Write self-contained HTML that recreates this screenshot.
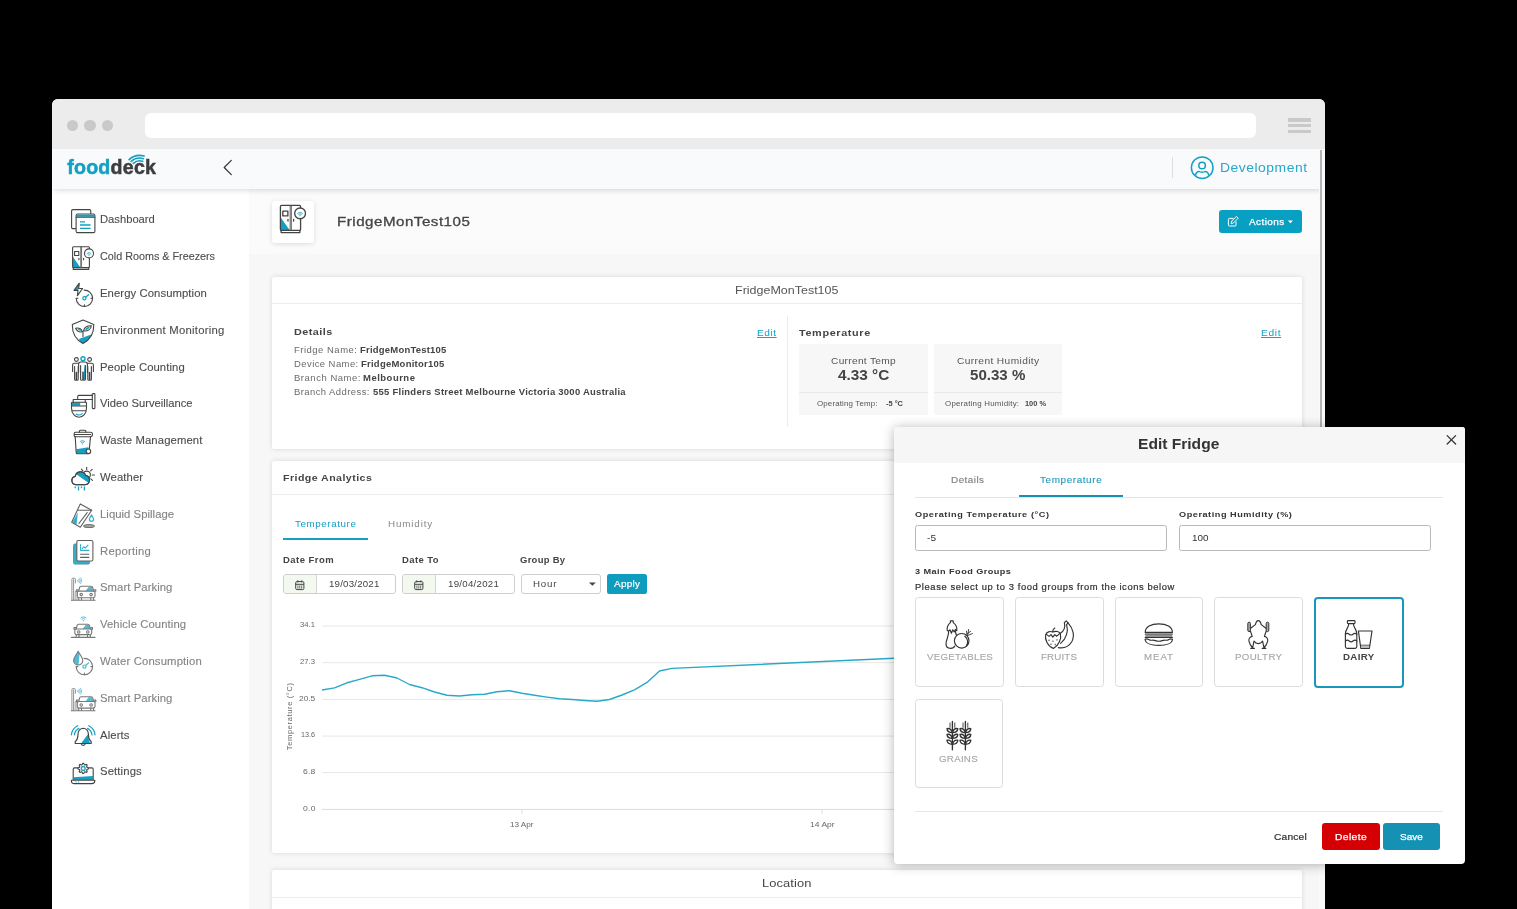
<!DOCTYPE html>
<html><head><meta charset="utf-8"><title>fooddeck</title>
<style>
html,body{margin:0;padding:0;}
body{width:1517px;height:909px;overflow:hidden;background:#000;position:relative;font-family:"Liberation Sans",sans-serif;}
.win{position:absolute;left:52px;top:99px;width:1273px;height:830px;border-radius:6px 6px 0 0;overflow:hidden;background:#f7f7f7;}
.pg{position:absolute;left:-52px;top:-99px;width:1517px;height:909px;}
.a{position:absolute;box-sizing:border-box;}
.t{position:absolute;white-space:pre;display:block;}
.tl{position:absolute;left:0;top:0;width:1517px;height:909px;will-change:transform;}
.card{position:absolute;background:#fff;box-shadow:0 0 5px rgba(0,0,0,.13);border-radius:2px;}
.dot{position:absolute;width:11.6px;height:11.6px;border-radius:50%;background:#c9c9c9;top:119.7px;}
svg{position:absolute;left:0;top:0;overflow:visible;}
</style></head><body>
<div class="win"><div class="pg">
<!-- browser chrome -->
<div class="a" style="left:52px;top:99px;width:1273px;height:50px;background:#ececec;"></div>
<div class="dot" style="left:66.5px"></div><div class="dot" style="left:84px"></div><div class="dot" style="left:101.6px"></div>
<div class="a" style="left:144.6px;top:113px;width:1111.6px;height:25px;border-radius:6px;background:#fff;"></div>
<div class="a" style="left:1287.8px;top:118.1px;width:23.2px;height:3.7px;background:#c9c9c9;border-radius:.5px;"></div>
<div class="a" style="left:1287.8px;top:123.9px;width:23.2px;height:3.5px;background:#c9c9c9;border-radius:.5px;"></div>
<div class="a" style="left:1287.8px;top:129.7px;width:23.2px;height:3.4px;background:#c9c9c9;border-radius:.5px;"></div>
<!-- page areas -->
<div class="a" style="left:249px;top:189px;width:1076px;height:65.2px;background:#fbfbfb;"></div>
<div class="a" style="left:52px;top:189px;width:197.2px;height:720px;background:#fff;"></div>
<!-- cards -->
<div class="card" style="left:271.8px;top:276.6px;width:1030.4px;height:172px;"></div>
<div class="a" style="left:271.8px;top:303px;width:1030.4px;height:1px;background:#ececec;"></div>
<div class="a" style="left:787px;top:315.6px;width:1px;height:111px;background:#ececec;"></div>
<div class="a" style="left:799px;top:344px;width:129px;height:70.9px;background:#f7f7f7;border-radius:2px;"></div>
<div class="a" style="left:933.9px;top:344px;width:128.6px;height:70.9px;background:#f7f7f7;border-radius:2px;"></div>
<div class="a" style="left:799px;top:392px;width:129px;height:1px;background:#eaeaea;"></div>
<div class="a" style="left:933.9px;top:392px;width:128.6px;height:1px;background:#eaeaea;"></div>
<div class="card" style="left:271.8px;top:460.6px;width:1030.4px;height:392.4px;"></div>
<div class="a" style="left:271.8px;top:494.2px;width:1030.4px;height:1px;background:#ececec;"></div>
<div class="a" style="left:283px;top:538.2px;width:85px;height:2px;background:#1a9fc0;"></div>
<div class="a" style="left:283.4px;top:574px;width:112.3px;height:19.5px;border:1px solid #cfcfcf;border-radius:3px;background:#fff;overflow:hidden;"><div style="position:absolute;left:0;top:0;width:31.4px;height:100%;background:#f4f9f0;border-right:1px solid #d4d4d4;"></div></div>
<div class="a" style="left:402.4px;top:574px;width:112.5px;height:19.5px;border:1px solid #cfcfcf;border-radius:3px;background:#fff;overflow:hidden;"><div style="position:absolute;left:0;top:0;width:31.4px;height:100%;background:#f4f9f0;border-right:1px solid #d4d4d4;"></div></div>
<div class="a" style="left:520.9px;top:574px;width:80px;height:19.5px;border:1px solid #cfcfcf;border-radius:3px;background:#fff;"></div>
<div class="a" style="left:606.7px;top:574.4px;width:40.2px;height:19.2px;border-radius:2.5px;background:#0f9dbf;"></div>
<div class="card" style="left:271.8px;top:870px;width:1030.4px;height:60px;"></div>
<div class="a" style="left:271.8px;top:897px;width:1030.4px;height:1px;background:#ececec;"></div>
<!-- title icon box + actions -->
<div class="a" style="left:271.8px;top:200.8px;width:42px;height:41.8px;background:#fff;border-radius:3px;box-shadow:0 1px 5px rgba(0,0,0,.13);"></div>
<div class="a" style="left:1218.9px;top:209.9px;width:83.3px;height:23.4px;border-radius:3px;background:#08a0c2;"></div>
<!-- app header -->
<div class="a" style="left:52px;top:149px;width:1273px;height:40px;background:#f9fafb;box-shadow:0 3px 6px -2px rgba(0,0,0,.16);"></div>
<div class="a" style="left:1172px;top:157px;width:1px;height:21px;background:#dedede;"></div>
<!-- scrollbar -->
<div class="a" style="left:1319.4px;top:149px;width:5.6px;height:760px;background:#fafafa;"></div>
<div class="a" style="left:1320.1px;top:150px;width:2.1px;height:420px;background:#b4b4b4;"></div>
<div class="tl"><span class="t" style="left:67.2px;top:154.9px;font-size:19.6px;line-height:24px;font-weight:700;letter-spacing:0.24px;color:#12a0c3;-webkit-text-stroke:0.5px #12a0c3;">food<span style="color:#3d3d3f;-webkit-text-stroke:0.5px #3d3d3f;">deck</span></span></div>
<svg width="1517" height="909" viewBox="0 0 1517 909">
<path d="M129.1,159.7 Q135.2,153.6 144.1,156 M131.1,161.5 Q136.4,156.4 143.4,158.7 M133.3,163.3 Q137.6,159.6 142.7,161.3" fill="none" stroke="#12a0c3" stroke-width="1.7" stroke-linecap="round"/>
<path d="M231.3,160.4 L224.2,167.5 L231.3,174.6" fill="none" stroke="#333" stroke-width="1.2" stroke-linecap="round" stroke-linejoin="round"/>
<!-- user icon -->
<g fill="none" stroke="#12a0c3" stroke-width="1.5"><circle cx="1202.2" cy="167.7" r="10.8"/><circle cx="1202.1" cy="165.5" r="3.3"/><path d="M1195.4,175.6 C1195.8,172.6 1197.8,171.5 1199.3,171.5 C1200.6,172.4 1203.6,172.4 1204.9,171.5 C1206.4,171.5 1208.4,172.6 1208.8,175.6"/></g>
<!-- actions icon -->
<g fill="none" stroke="#fff" stroke-width="1" stroke-linecap="round" stroke-linejoin="round"><path d="M1233,218.4 H1229.4 Q1228.4,218.4 1228.4,219.4 V225 Q1228.4,226 1229.4,226 H1235 Q1236,226 1236,225 V222"/><path d="M1231.2,223.4 L1231.8,221 L1236.4,216.4 L1238.2,218.2 L1233.6,222.8 Z"/></g>
<path d="M1287.8,220.6 h5.2 l-2.6,2.7 Z" fill="#fff"/>
<path d="M589,582.6 h6.8 l-3.4,3.2 Z" fill="#444"/>
<g transform="translate(295.2,580)" fill="none" stroke="#444" stroke-width="1"><rect x="0.5" y="1.6" width="8.2" height="8" rx="1.2"/><path d="M0.5,4.3 H8.7 M2.6,0.3 V2.4 M6.6,0.3 V2.4"/><path d="M2.2,6.1 h1 M4.1,6.1 h1 M6,6.1 h1 M2.2,7.9 h1 M4.1,7.9 h1 M6,7.9 h1" stroke-width="1.1"/></g><g transform="translate(414.2,580)" fill="none" stroke="#444" stroke-width="1"><rect x="0.5" y="1.6" width="8.2" height="8" rx="1.2"/><path d="M0.5,4.3 H8.7 M2.6,0.3 V2.4 M6.6,0.3 V2.4"/><path d="M2.2,6.1 h1 M4.1,6.1 h1 M6,6.1 h1 M2.2,7.9 h1 M4.1,7.9 h1 M6,7.9 h1" stroke-width="1.1"/></g>
<g transform="translate(71,209)"><path d="M4.6,19.6 H2 Q0.6,19.6 0.6,18.2 V2 Q0.6,0.6 2,0.6 H18.4 Q19.8,0.6 19.8,2 V4.4" fill="none" stroke="#444" stroke-width="1.1" stroke-linecap="round" stroke-linejoin="round"/><rect x="5.1" y="5" width="18.8" height="18.6" rx="1.4" fill="#fff" stroke="#444" stroke-width="1.1"/><rect x="5.6" y="5.6" width="17.8" height="2.2" fill="#12a0c3"/><path d="M5.1,8.3 H23.9" fill="none" stroke="#444" stroke-width="1.1" stroke-linecap="round" stroke-linejoin="round"/><path d="M9,12.9 H14 M9,16 H19.6 M9,19.3 H19.6" fill="none" stroke="#12a0c3" stroke-width="1.3"/></g>
<g transform="translate(72,246)"><path d="M1,11 L8.4,21.4 H1 Z" fill="#12a0c3"/><rect x="0.6" y="0.8" width="16.8" height="20.8" rx="1" fill="none" stroke="#444" stroke-width="1.1" stroke-linecap="round" stroke-linejoin="round"/><path d="M1.2,21.6 V23.4 H16.8 V21.6" fill="none" stroke="#444" stroke-width="1.1" stroke-linecap="round" stroke-linejoin="round"/><path d="M9.2,0.8 V21.6" fill="none" stroke="#444" stroke-width="1.7"/><path d="M9.2,1.2 V21.4" fill="none" stroke="#ddd" stroke-width="0.5"/><rect x="2.6" y="5.5" width="4.2" height="4" fill="none" stroke="#444" stroke-width="1.1" stroke-linecap="round" stroke-linejoin="round"/><path d="M6.9,12.4 V13.8 M11.6,12.4 V13.8" fill="none" stroke="#444" stroke-width="1.1" stroke-linecap="round" stroke-linejoin="round"/><circle cx="17" cy="7.4" r="4.5" fill="#fff" stroke="#444" stroke-width="1.1"/><circle cx="17" cy="9.3" r="0.51" fill="#12a0c3"/><path d="M15.92,8.22 A1.53,1.53 0 0 1 18.08,8.22" fill="none" stroke="#12a0c3" stroke-width="0.7" stroke-linecap="round"/><path d="M15.02,7.32 A2.80,2.80 0 0 1 18.98,7.32" fill="none" stroke="#12a0c3" stroke-width="0.7" stroke-linecap="round"/></g>
<g transform="translate(73,282)"><path d="M6.3,1.2 L1,8.4 H5.2 Z" fill="#12a0c3"/><path d="M6.3,1.2 L1,8.4 H5 L4.4,13.6 L9.6,6.5 H5.7 Z" fill="none" stroke="#444" stroke-width="1.1" stroke-linecap="round" stroke-linejoin="round"/><path d="M11.11,8.10 A8.2,8.2 0 1 1 3.20,16.59" fill="none" stroke="#444" stroke-width="1.1" stroke-linecap="round" stroke-linejoin="round"/><path d="M19.60,16.30 h-1.7 M11.40,24.50 v-1.7 M3.20,16.30 h1.7" fill="none" stroke="#444" stroke-width="1.1" stroke-linecap="round" stroke-linejoin="round"/><circle cx="11.4" cy="16.3" r="1.6" fill="none" stroke="#12a0c3" stroke-width="1.2"/><path d="M12.60,15.20 L15.50,12.70" stroke="#12a0c3" stroke-width="1.3" stroke-linecap="round"/></g>
<g transform="translate(72,319)"><path d="M6.9,20 L19.9,15.2 C18.2,19.6 15.3,22.4 11,24.4 C9.4,23.6 7.9,22.1 6.9,20Z" fill="#12a0c3"/><path d="M11,1 L21.8,5.6 C21.9,14.2 19,20.6 11,24.4 C3,20.6 0.2,14.2 0.3,5.6 Z" fill="none" stroke="#444" stroke-width="1.1" stroke-linecap="round" stroke-linejoin="round"/><path d="M10.4,12.8 C7.6,13.4 4.8,12 3.6,9.2 C6.8,8.4 9.8,9.8 10.4,12.8Z" fill="#fff" stroke="#444" stroke-width="1.1" stroke-linejoin="round"/><path d="M11.6,11.9 C12,8.6 15,6.6 19.4,6.7 C19,10.2 15.9,12.5 11.6,11.9Z" fill="#fff" stroke="#444" stroke-width="1.1" stroke-linejoin="round"/><path d="M5.2,9.6 C7,9.4 8.8,10.3 9.6,12 C8,12.2 6.2,11.4 5.2,9.6Z M13,10.9 C13.6,9 15.6,7.8 17.9,7.8 C17.2,9.8 15.4,11 13,10.9Z" fill="#12a0c3"/><path d="M11,17.6 V12.4" fill="none" stroke="#444" stroke-width="1.1" stroke-linecap="round" stroke-linejoin="round"/></g>
<g transform="translate(72,356)"><circle cx="4.4" cy="3.5" r="1.9" fill="none" stroke="#444" stroke-width="1.1" stroke-linecap="round" stroke-linejoin="round"/><circle cx="17.6" cy="3.5" r="1.9" fill="none" stroke="#444" stroke-width="1.1" stroke-linecap="round" stroke-linejoin="round"/><circle cx="11" cy="2.7" r="2" fill="none" stroke="#12a0c3" stroke-width="1.4"/><path d="M0.60,15.50 V9.10 Q0.60,7.30 2.40,7.30 H6.40 Q8.20,7.30 8.20,9.10 V15.50" fill="none" stroke="#444" stroke-width="1.1" stroke-linecap="round" stroke-linejoin="round"/><path d="M2.60,10.50 V23.20 a1,1 0 0 0 2,0 V16.30 M6.20,10.50 V23.20 a1,1 0 0 1 -2,0 V16.30" fill="none" stroke="#444" stroke-width="1.1" stroke-linecap="round" stroke-linejoin="round"/><path d="M13.80,15.50 V9.10 Q13.80,7.30 15.60,7.30 H19.60 Q21.40,7.30 21.40,9.10 V15.50" fill="none" stroke="#444" stroke-width="1.1" stroke-linecap="round" stroke-linejoin="round"/><path d="M15.80,10.50 V23.20 a1,1 0 0 0 2,0 V16.30 M19.40,10.50 V23.20 a1,1 0 0 1 -2,0 V16.30" fill="none" stroke="#444" stroke-width="1.1" stroke-linecap="round" stroke-linejoin="round"/><path d="M12.6,9 L11.3,23.4 H13.2 V9Z" fill="#12a0c3"/><path d="M6.6,16.5 V8.2 Q6.6,6 8.8,6 H13.2 Q15.4,6 15.4,8.2 V16.5" fill="#fff" stroke="#444" stroke-width="1.1" stroke-linecap="round"/><path d="M12.6,9 L11.3,23.4 H13.2 V9Z" fill="#12a0c3"/><path d="M8.6,9.5 V23.2 a1.1,1.1 0 0 0 2.2,0 V16 M13.4,9.5 V23.2 a1.1,1.1 0 0 1 -2.2,0 V16" fill="none" stroke="#444" stroke-width="1.1" stroke-linecap="round" stroke-linejoin="round"/></g>
<g transform="translate(71,393)"><rect x="21.3" y="0.6" width="2.6" height="15" rx="0.6" fill="none" stroke="#444" stroke-width="1.1" stroke-linecap="round" stroke-linejoin="round"/><path d="M6.7,6.5 V3.6 Q6.7,2.4 7.9,2.4 H21.3 M13.4,6.5 H21.3" fill="none" stroke="#444" stroke-width="1.1" stroke-linecap="round" stroke-linejoin="round"/><rect x="0.8" y="9.5" width="8.4" height="3.2" fill="#12a0c3"/><path d="M2.2,9.3 V6.5 H14.2 V9.3" fill="none" stroke="#444" stroke-width="1.1" stroke-linecap="round" stroke-linejoin="round"/><rect x="0.5" y="9.3" width="15" height="3.7" rx="0.8" fill="none" stroke="#444" stroke-width="1.1" stroke-linecap="round" stroke-linejoin="round"/><path d="M0.5,13 V15 C0.5,20.5 4,24.3 8,24.3 C12,24.3 15.5,20.5 15.5,15 V13 M0.8,17.7 H15.2" fill="none" stroke="#444" stroke-width="1.1" stroke-linecap="round" stroke-linejoin="round"/><path d="M5.2,21 C7,22.3 9.4,22.3 11.2,20.6" fill="none" stroke="#12a0c3" stroke-width="1.1" stroke-linecap="round" stroke-linejoin="round"/></g>
<g transform="translate(73,428)"><path d="M3.2,21.2 L15.4,19.2 L16,25.6 H3.6 Z" fill="#12a0c3"/><path d="M6.4,4.3 V3.2 Q6.4,2.2 7.4,2.2 H11.9 Q12.9,2.2 12.9,3.2 V4.3" fill="none" stroke="#444" stroke-width="1.1" stroke-linecap="round" stroke-linejoin="round"/><path d="M2.4,4.3 H17.5 Q19.5,4.3 19.5,6.3 Q19.5,8.8 17.5,8.8 H2.4 Q1.2,8.8 1.2,7.6 V5.5 Q1.2,4.3 2.4,4.3 Z M1.2,6.5 H17.6" fill="none" stroke="#444" stroke-width="1.1" stroke-linecap="round" stroke-linejoin="round"/><path d="M2.2,8.8 L3.2,24.6 Q3.3,25.8 4.5,25.8 H14.5 Q15.9,25.8 16,24.6 L17.5,8.8" fill="none" stroke="#444" stroke-width="1.1" stroke-linecap="round" stroke-linejoin="round"/><circle cx="15.4" cy="23.3" r="2.3" fill="#fff" stroke="#444" stroke-width="1.1"/><circle cx="9.4" cy="15.8" r="0.60" fill="#12a0c3"/><path d="M8.13,14.53 A1.80,1.80 0 0 1 10.67,14.53" fill="none" stroke="#12a0c3" stroke-width="0.75" stroke-linecap="round"/><path d="M7.07,13.47 A3.30,3.30 0 0 1 11.73,13.47" fill="none" stroke="#12a0c3" stroke-width="0.75" stroke-linecap="round"/></g>
<g transform="translate(71,466)"><circle cx="15.7" cy="8.8" r="3.7" fill="#fff" stroke="#444" stroke-width="1.1"/><path d="M15.7,1.2 V3.4 M10.4,3.2 L11.9,4.8 M21.2,3.3 L19.6,4.9 M21.2,9 H23.4 M19.8,12.9 L21.4,14.4" fill="none" stroke="#444" stroke-width="1.1" stroke-linecap="round" stroke-linejoin="round"/><path d="M4.8,18.7 A4.2,4.2 0 0 1 4.2,10.4 A5.4,5.4 0 0 1 14.6,9.4 A4.7,4.7 0 0 1 14.2,18.7 Z" fill="#fff" stroke="#444" stroke-width="1.1" stroke-linejoin="round"/><clipPath id="cl"><path d="M4.8,18.7 A4.2,4.2 0 0 1 4.2,10.4 A5.4,5.4 0 0 1 14.6,9.4 A4.7,4.7 0 0 1 14.2,18.7 Z"/></clipPath><path d="M5.6,8.6 L18.4,17.6 L20,4 L8,2 Z" fill="#12a0c3" clip-path="url(#cl)"/><path d="M4.8,18.7 A4.2,4.2 0 0 1 4.2,10.4 A5.4,5.4 0 0 1 14.6,9.4 A4.7,4.7 0 0 1 14.2,18.7 Z" fill="none" stroke="#444" stroke-width="1.1" stroke-linejoin="round"/><path d="M4.2,20.5 V22.2 M7.5,20.5 V24.5 M10.5,20.5 V22.2 M13.4,20.5 V24.5" fill="none" stroke="#12a0c3" stroke-width="1.3"/></g>
<g opacity="0.85"><g transform="translate(71,503)"><path d="M6.9,9.6 L1.4,19 L5.6,21.5 Z" fill="#12a0c3"/><path d="M9.3,0.9 L20.7,7.3 L9.3,24.3 L0.7,19.2 Z" fill="none" stroke="#444" stroke-width="1.1" stroke-linecap="round" stroke-linejoin="round"/><path d="M7.1,7.3 H20.7 M16.2,9.7 L7.9,20.5" fill="none" stroke="#444" stroke-width="1.1" stroke-linecap="round" stroke-linejoin="round"/><path d="M20.5,12.2 C21.8,14 22.6,15.2 22.6,16.3 A2.1,2.1 0 0 1 18.4,16.3 C18.4,15.2 19.2,14 20.5,12.2Z" fill="none" stroke="#12a0c3" stroke-width="1.3"/><ellipse cx="18" cy="23.1" rx="5.6" ry="1.5" fill="#999" stroke="#444" stroke-width="0.9"/></g></g>
<g opacity="0.85"><g transform="translate(73,540)"><rect x="0.5" y="4" width="16.1" height="20.1" rx="1.4" fill="#12a0c3" stroke="#3a7f90" stroke-width="0.9"/><rect x="3.8" y="0.5" width="16.1" height="20.5" rx="1.4" fill="#fff" stroke="#444" stroke-width="1.1"/><path d="M7.6,4.5 V10.4 H15.8 M9.2,8.6 L10.8,6.9 L12.2,8 L15,5.2" fill="none" stroke="#12a0c3" stroke-width="1.1" stroke-linecap="round" stroke-linejoin="round"/><path d="M7.6,14.2 H15.8 M7.6,17.4 H15.8" fill="none" stroke="#444" stroke-width="1.1" stroke-linecap="round" stroke-linejoin="round"/></g></g>
<g opacity="0.72"><g transform="translate(71,577)"><path d="M0.9,23 V2.2 Q0.9,1.2 1.9,1.2 H3.4 Q4.4,1.2 4.4,2.2 V6 M2.6,23 V2.6" fill="none" stroke="#444" stroke-width="0.8" stroke-linecap="round"/><path d="M4.2,23 V14.2 H6 V23" fill="none" stroke="#444" stroke-width="0.7"/><circle cx="6.4" cy="3.8" r="0.6" fill="#12a0c3"/><path d="M7.60,2.60 A1.70,1.70 0 0 1 7.60,5.00" fill="none" stroke="#12a0c3" stroke-width="0.8" stroke-linecap="round"/><path d="M8.52,1.68 A3.00,3.00 0 0 1 8.52,5.92" fill="none" stroke="#12a0c3" stroke-width="0.8" stroke-linecap="round"/><path d="M9.44,0.76 A4.30,4.30 0 0 1 9.44,6.84" fill="none" stroke="#12a0c3" stroke-width="0.8" stroke-linecap="round"/><path d="M17.55,9.90 L21.00,9.90 L22.20,14.10 L14.55,14.10 Z" fill="#12a0c3"/><path d="M7.70,14.10 L8.60,10.50 Q8.90,9.30 10.10,9.30 H20.20 Q21.40,9.30 21.70,10.50 L22.60,14.10" fill="none" stroke="#444" stroke-width="1.1" stroke-linecap="round" stroke-linejoin="round"/><rect x="6.30" y="14.10" width="17.70" height="6.60" rx="1.6" fill="none" stroke="#444" stroke-width="1.1" stroke-linecap="round" stroke-linejoin="round"/><path d="M6.90,14.30 h-1.4 v-1.6 h1.8 M23.40,14.30 h1.4 v-1.6 h-1.8" fill="none" stroke="#444" stroke-width="1.1" stroke-linecap="round" stroke-linejoin="round"/><circle cx="10.20" cy="17.60" r="1.25" fill="none" stroke="#444" stroke-width="1.1" stroke-linecap="round" stroke-linejoin="round"/><circle cx="20.10" cy="17.60" r="1.25" fill="none" stroke="#444" stroke-width="1.1" stroke-linecap="round" stroke-linejoin="round"/><path d="M7.70,20.70 V23.00 M10.50,20.70 V23.00 M22.60,20.70 V23.00 M19.80,20.70 V23.00" fill="none" stroke="#444" stroke-width="1.1" stroke-linecap="round" stroke-linejoin="round"/><path d="M0.4,23.3 H24" fill="none" stroke="#444" stroke-width="1.1" stroke-linecap="round" stroke-linejoin="round"/></g></g>
<g opacity="0.72"><g transform="translate(71,687.4)"><path d="M0.9,23 V2.2 Q0.9,1.2 1.9,1.2 H3.4 Q4.4,1.2 4.4,2.2 V6 M2.6,23 V2.6" fill="none" stroke="#444" stroke-width="0.8" stroke-linecap="round"/><path d="M4.2,23 V14.2 H6 V23" fill="none" stroke="#444" stroke-width="0.7"/><circle cx="6.4" cy="3.8" r="0.6" fill="#12a0c3"/><path d="M7.60,2.60 A1.70,1.70 0 0 1 7.60,5.00" fill="none" stroke="#12a0c3" stroke-width="0.8" stroke-linecap="round"/><path d="M8.52,1.68 A3.00,3.00 0 0 1 8.52,5.92" fill="none" stroke="#12a0c3" stroke-width="0.8" stroke-linecap="round"/><path d="M9.44,0.76 A4.30,4.30 0 0 1 9.44,6.84" fill="none" stroke="#12a0c3" stroke-width="0.8" stroke-linecap="round"/><path d="M17.55,9.90 L21.00,9.90 L22.20,14.10 L14.55,14.10 Z" fill="#12a0c3"/><path d="M7.70,14.10 L8.60,10.50 Q8.90,9.30 10.10,9.30 H20.20 Q21.40,9.30 21.70,10.50 L22.60,14.10" fill="none" stroke="#444" stroke-width="1.1" stroke-linecap="round" stroke-linejoin="round"/><rect x="6.30" y="14.10" width="17.70" height="6.60" rx="1.6" fill="none" stroke="#444" stroke-width="1.1" stroke-linecap="round" stroke-linejoin="round"/><path d="M6.90,14.30 h-1.4 v-1.6 h1.8 M23.40,14.30 h1.4 v-1.6 h-1.8" fill="none" stroke="#444" stroke-width="1.1" stroke-linecap="round" stroke-linejoin="round"/><circle cx="10.20" cy="17.60" r="1.25" fill="none" stroke="#444" stroke-width="1.1" stroke-linecap="round" stroke-linejoin="round"/><circle cx="20.10" cy="17.60" r="1.25" fill="none" stroke="#444" stroke-width="1.1" stroke-linecap="round" stroke-linejoin="round"/><path d="M7.70,20.70 V23.00 M10.50,20.70 V23.00 M22.60,20.70 V23.00 M19.80,20.70 V23.00" fill="none" stroke="#444" stroke-width="1.1" stroke-linecap="round" stroke-linejoin="round"/><path d="M0.4,23.3 H24" fill="none" stroke="#444" stroke-width="1.1" stroke-linecap="round" stroke-linejoin="round"/></g></g>
<g opacity="0.72"><g transform="translate(71,613)"><circle cx="12.4" cy="7.6" r="0.69" fill="#12a0c3"/><path d="M10.94,6.14 A2.07,2.07 0 0 1 13.86,6.14" fill="none" stroke="#12a0c3" stroke-width="1.0" stroke-linecap="round"/><path d="M9.72,4.92 A3.79,3.79 0 0 1 15.08,4.92" fill="none" stroke="#12a0c3" stroke-width="1.0" stroke-linecap="round"/><path d="M14.65,11.90 L17.70,11.90 L18.90,16.00 L11.65,16.00 Z" fill="#12a0c3"/><path d="M5.20,16.00 L6.10,12.50 Q6.40,11.30 7.60,11.30 H16.90 Q18.10,11.30 18.40,12.50 L19.30,16.00" fill="none" stroke="#444" stroke-width="1.1" stroke-linecap="round" stroke-linejoin="round"/><rect x="3.80" y="16.00" width="16.90" height="5.60" rx="1.6" fill="none" stroke="#444" stroke-width="1.1" stroke-linecap="round" stroke-linejoin="round"/><path d="M4.40,16.20 h-1.4 v-1.6 h1.8 M20.10,16.20 h1.4 v-1.6 h-1.8" fill="none" stroke="#444" stroke-width="1.1" stroke-linecap="round" stroke-linejoin="round"/><circle cx="7.70" cy="19.00" r="1.25" fill="none" stroke="#444" stroke-width="1.1" stroke-linecap="round" stroke-linejoin="round"/><circle cx="16.80" cy="19.00" r="1.25" fill="none" stroke="#444" stroke-width="1.1" stroke-linecap="round" stroke-linejoin="round"/><path d="M5.20,21.60 V24.20 M8.00,21.60 V24.20 M19.30,21.60 V24.20 M16.50,21.60 V24.20" fill="none" stroke="#444" stroke-width="1.1" stroke-linecap="round" stroke-linejoin="round"/><path d="M0.4,24.4 H24" fill="none" stroke="#444" stroke-width="1.1" stroke-linecap="round" stroke-linejoin="round"/></g></g>
<g opacity="0.72"><g transform="translate(73,650)"><path d="M5.2,1.3 C3.6,4.6 0.7,7.6 0.7,10.4 A4.5,4.5 0 0 0 5.6,14.9 L6.6,3.8 Z" fill="#12a0c3"/><path d="M5.2,1.2 C3.6,4.6 0.6,7.6 0.6,10.4 A4.6,4.6 0 0 0 9.8,10.4 C9.8,7.6 6.8,4.6 5.2,1.2 Z" fill="none" stroke="#444" stroke-width="1.1" stroke-linecap="round" stroke-linejoin="round"/><path d="M11.11,8.40 A8.2,8.2 0 1 1 3.20,16.89" fill="none" stroke="#444" stroke-width="1.1" stroke-linecap="round" stroke-linejoin="round"/><path d="M19.60,16.60 h-1.7 M11.40,24.80 v-1.7 M3.20,16.60 h1.7" fill="none" stroke="#444" stroke-width="1.1" stroke-linecap="round" stroke-linejoin="round"/><circle cx="11.4" cy="16.6" r="1.6" fill="none" stroke="#12a0c3" stroke-width="1.2"/><path d="M12.60,15.50 L15.50,13.00" stroke="#12a0c3" stroke-width="1.3" stroke-linecap="round"/></g></g>
<g transform="translate(71,724)"><path d="M17.2,10 L10.4,19 H19.4 L18,17 Z" fill="#12a0c3"/><path d="M12.2,4.2 C9,4.6 7,7.2 7,10.6 C7,13.6 6.6,15.6 4.6,17.4 H4.2 V19.5 H20.2 V17.4 H19.8 C17.8,15.6 17.4,13.6 17.4,10.6 C17.4,7.2 15.4,4.6 12.2,4.2 Z" fill="none" stroke="#444" stroke-width="1.1" stroke-linecap="round" stroke-linejoin="round"/><path d="M10,19.7 A2.3,2.3 0 0 0 14.4,19.7" fill="none" stroke="#444" stroke-width="1.1" stroke-linecap="round" stroke-linejoin="round"/><path d="M0.4,10.8 C0.8,6.8 3.2,3.4 6.7,1.7 M3.4,10.8 C3.8,8 5.4,5.6 7.9,4.4 M24,10.8 C23.6,6.8 21.2,3.4 17.7,1.7 M21,10.8 C20.6,8 19,5.6 16.5,4.4" fill="none" stroke="#12a0c3" stroke-width="1.2" stroke-linecap="round"/></g>
<g transform="translate(71,761)"><path d="M2.6,16.3 L21.8,14.9 V19 H2.6 Z" fill="#12a0c3"/><path d="M2.2,19.2 V8.2 Q2.2,6.9 3.5,6.9 H20.9 Q22.2,6.9 22.2,8.2 V19.2" fill="none" stroke="#444" stroke-width="1.1" stroke-linecap="round" stroke-linejoin="round"/><path d="M0.4,19.3 H23.8 V20 Q23.8,22.6 20.8,22.6 H3.4 Q0.4,22.6 0.4,20 Z" fill="#fff" stroke="#444" stroke-width="1.1" stroke-linejoin="round"/><path d="M4.4,21 h1.2 M7,21 h1.2" fill="none" stroke="#12a0c3" stroke-width="1.2"/><path d="M11.69,2.23 L12.71,2.23 L13.33,3.67 L14.04,3.96 L15.50,3.38 L16.22,4.10 L15.64,5.56 L15.93,6.27 L17.37,6.89 L17.37,7.91 L15.93,8.53 L15.64,9.24 L16.22,10.70 L15.50,11.42 L14.04,10.84 L13.33,11.13 L12.71,12.57 L11.69,12.57 L11.07,11.13 L10.36,10.84 L8.90,11.42 L8.18,10.70 L8.76,9.24 L8.47,8.53 L7.03,7.91 L7.03,6.89 L8.47,6.27 L8.76,5.56 L8.18,4.10 L8.90,3.38 L10.36,3.96 L11.07,3.67Z" fill="#fff" stroke="#444" stroke-width="1.1" stroke-linejoin="round"/><circle cx="12.2" cy="7.4" r="1.9" fill="none" stroke="#12a0c3" stroke-width="1.3"/></g>
<g transform="translate(279.7,204.5) scale(1.2)"><path d="M1,11 L8.4,21.4 H1 Z" fill="#12a0c3"/><rect x="0.6" y="0.8" width="16.8" height="20.8" rx="1" fill="none" stroke="#444" stroke-width="1.1" stroke-linecap="round" stroke-linejoin="round"/><path d="M1.2,21.6 V23.4 H16.8 V21.6" fill="none" stroke="#444" stroke-width="1.1" stroke-linecap="round" stroke-linejoin="round"/><path d="M9.2,0.8 V21.6" fill="none" stroke="#444" stroke-width="1.7"/><path d="M9.2,1.2 V21.4" fill="none" stroke="#ddd" stroke-width="0.5"/><rect x="2.6" y="5.5" width="4.2" height="4" fill="none" stroke="#444" stroke-width="1.1" stroke-linecap="round" stroke-linejoin="round"/><path d="M6.9,12.4 V13.8 M11.6,12.4 V13.8" fill="none" stroke="#444" stroke-width="1.1" stroke-linecap="round" stroke-linejoin="round"/><circle cx="17" cy="7.4" r="4.5" fill="#fff" stroke="#444" stroke-width="1.1"/><circle cx="17" cy="9.3" r="0.51" fill="#12a0c3"/><path d="M15.92,8.22 A1.53,1.53 0 0 1 18.08,8.22" fill="none" stroke="#12a0c3" stroke-width="0.7" stroke-linecap="round"/><path d="M15.02,7.32 A2.80,2.80 0 0 1 18.98,7.32" fill="none" stroke="#12a0c3" stroke-width="0.7" stroke-linecap="round"/></g>
<!-- chart -->
<g stroke="#e7e7e7" stroke-width="1" fill="none"><line x1="322" x2="894" y1="626.0" y2="626.0"/><line x1="322" x2="894" y1="662.7" y2="662.7"/><line x1="322" x2="894" y1="699.4" y2="699.4"/><line x1="322" x2="894" y1="736.1" y2="736.1"/><line x1="322" x2="894" y1="772.6" y2="772.6"/></g>
<path d="M322,809.4 H894 M522,809.4 v4.4 M822,809.4 v4.4" stroke="#dcdcdc" stroke-width="1" fill="none"/>
<path d="M322.0,690.0 L334.5,687.9 L347.0,682.8 L359.5,679.4 L372.0,675.8 L384.5,675.3 L397.0,678.0 L409.5,684.5 L422.0,687.7 L434.5,692.0 L447.0,695.3 L459.5,696.0 L472.0,694.7 L484.5,694.2 L497.0,691.7 L509.5,690.8 L522.0,693.3 L534.5,695.3 L547.0,697.1 L559.5,698.7 L572.0,699.5 L584.5,700.5 L597.0,701.3 L609.5,699.5 L622.0,695.0 L634.5,689.8 L647.0,682.4 L659.5,671.0 L672.0,668.4 L894.5,658.3" fill="none" stroke="#29a9c9" stroke-width="1.4" stroke-linejoin="round"/>
</svg>
<div class="tl">
<span id="t0" class="t" style="left:1220.3px;top:160.0px;font-size:12.3px;line-height:17.2px;font-weight:400;color:#2aa6c6;letter-spacing:0.457px;transform:scaleX(1.1300);transform-origin:0 50%;">Development</span>
<span id="t1" class="t" style="left:336.7px;top:213.0px;font-size:13.4px;line-height:18.8px;font-weight:400;color:#444;letter-spacing:0.445px;-webkit-text-stroke:0.30px #444;transform:scaleX(1.1300);transform-origin:0 50%;">FridgeMonTest105</span>
<span id="t2" class="t" style="left:1249.3px;top:216.0px;font-size:8.8px;line-height:12.3px;font-weight:400;color:#fff;letter-spacing:0.377px;-webkit-text-stroke:0.25px #fff;transform:scaleX(1.1300);transform-origin:0 50%;">Actions</span>
<span id="t3" class="t" style="left:99.8px;top:213.0px;font-size:10px;line-height:14.0px;font-weight:400;color:#4c4c4c;letter-spacing:-0.000px;-webkit-text-stroke:0.10px #4c4c4c;transform:scaleX(1.1202);transform-origin:0 50%;">Dashboard</span>
<span id="t4" class="t" style="left:99.8px;top:250.0px;font-size:10px;line-height:14.0px;font-weight:400;color:#4c4c4c;letter-spacing:0.000px;-webkit-text-stroke:0.10px #4c4c4c;transform:scaleX(1.0778);transform-origin:0 50%;">Cold Rooms &amp; Freezers</span>
<span id="t5" class="t" style="left:99.8px;top:287.0px;font-size:10px;line-height:14.0px;font-weight:400;color:#4c4c4c;letter-spacing:0.066px;-webkit-text-stroke:0.10px #4c4c4c;transform:scaleX(1.1300);transform-origin:0 50%;">Energy Consumption</span>
<span id="t6" class="t" style="left:99.8px;top:324.0px;font-size:10px;line-height:14.0px;font-weight:400;color:#4c4c4c;letter-spacing:0.205px;-webkit-text-stroke:0.10px #4c4c4c;transform:scaleX(1.1300);transform-origin:0 50%;">Environment Monitoring</span>
<span id="t7" class="t" style="left:99.8px;top:361.0px;font-size:10px;line-height:14.0px;font-weight:400;color:#4c4c4c;letter-spacing:0.072px;-webkit-text-stroke:0.10px #4c4c4c;transform:scaleX(1.1300);transform-origin:0 50%;">People Counting</span>
<span id="t8" class="t" style="left:99.8px;top:397.0px;font-size:10px;line-height:14.0px;font-weight:400;color:#4c4c4c;letter-spacing:0.000px;-webkit-text-stroke:0.10px #4c4c4c;transform:scaleX(1.1191);transform-origin:0 50%;">Video Surveillance</span>
<span id="t9" class="t" style="left:99.8px;top:434.0px;font-size:10px;line-height:14.0px;font-weight:400;color:#4c4c4c;letter-spacing:0.100px;-webkit-text-stroke:0.10px #4c4c4c;transform:scaleX(1.1300);transform-origin:0 50%;">Waste Management</span>
<span id="t10" class="t" style="left:99.8px;top:471.0px;font-size:10px;line-height:14.0px;font-weight:400;color:#4c4c4c;letter-spacing:0.086px;-webkit-text-stroke:0.10px #4c4c4c;transform:scaleX(1.1300);transform-origin:0 50%;">Weather</span>
<span id="t11" class="t" style="left:99.8px;top:508.0px;font-size:10px;line-height:14.0px;font-weight:400;color:#838383;letter-spacing:0.037px;-webkit-text-stroke:0.10px #838383;transform:scaleX(1.1300);transform-origin:0 50%;">Liquid Spillage</span>
<span id="t12" class="t" style="left:99.8px;top:545.0px;font-size:10px;line-height:14.0px;font-weight:400;color:#838383;letter-spacing:0.211px;-webkit-text-stroke:0.10px #838383;transform:scaleX(1.1300);transform-origin:0 50%;">Reporting</span>
<span id="t13" class="t" style="left:99.8px;top:581.0px;font-size:10px;line-height:14.0px;font-weight:400;color:#838383;letter-spacing:0.059px;-webkit-text-stroke:0.10px #838383;transform:scaleX(1.1300);transform-origin:0 50%;">Smart Parking</span>
<span id="t14" class="t" style="left:99.8px;top:618.0px;font-size:10px;line-height:14.0px;font-weight:400;color:#838383;letter-spacing:0.075px;-webkit-text-stroke:0.10px #838383;transform:scaleX(1.1300);transform-origin:0 50%;">Vehicle Counting</span>
<span id="t15" class="t" style="left:99.8px;top:655.0px;font-size:10px;line-height:14.0px;font-weight:400;color:#838383;letter-spacing:0.125px;-webkit-text-stroke:0.10px #838383;transform:scaleX(1.1300);transform-origin:0 50%;">Water Consumption</span>
<span id="t16" class="t" style="left:99.8px;top:692.0px;font-size:10px;line-height:14.0px;font-weight:400;color:#838383;letter-spacing:0.059px;-webkit-text-stroke:0.10px #838383;transform:scaleX(1.1300);transform-origin:0 50%;">Smart Parking</span>
<span id="t17" class="t" style="left:99.8px;top:729.0px;font-size:10px;line-height:14.0px;font-weight:400;color:#4c4c4c;letter-spacing:0.109px;-webkit-text-stroke:0.10px #4c4c4c;transform:scaleX(1.1300);transform-origin:0 50%;">Alerts</span>
<span id="t18" class="t" style="left:99.8px;top:765.0px;font-size:10px;line-height:14.0px;font-weight:400;color:#4c4c4c;letter-spacing:0.109px;-webkit-text-stroke:0.10px #4c4c4c;transform:scaleX(1.1300);transform-origin:0 50%;">Settings</span>
<span id="t19" class="t" style="left:735.4px;top:282.0px;font-size:11.4px;line-height:16.0px;font-weight:400;color:#555;letter-spacing:0.000px;transform:scaleX(1.0966);transform-origin:0 50%;">FridgeMonTest105</span>
<span id="t20" class="t" style="left:293.9px;top:325.0px;font-size:9.6px;line-height:13.4px;font-weight:700;color:#444;letter-spacing:0.398px;transform:scaleX(1.1300);transform-origin:0 50%;">Details</span>
<span id="t21" class="t" style="left:756.8px;top:327.0px;font-size:9px;line-height:12.6px;font-weight:400;color:#12a0c3;letter-spacing:0.459px;text-decoration:underline;transform:scaleX(1.1300);transform-origin:0 50%;">Edit</span>
<span id="t22" class="t" style="left:294.0px;top:345.0px;font-size:8.4px;line-height:11.8px;font-weight:400;color:#6a6a6a;letter-spacing:0.450px;transform:scaleX(1.1300);transform-origin:0 50%;">Fridge Name:</span>
<span id="t23" class="t" style="left:359.5px;top:345.0px;font-size:8.4px;line-height:11.8px;font-weight:700;color:#444;letter-spacing:0.201px;transform:scaleX(1.1300);transform-origin:0 50%;">FridgeMonTest105</span>
<span id="t24" class="t" style="left:294.0px;top:359.0px;font-size:8.4px;line-height:11.8px;font-weight:400;color:#6a6a6a;letter-spacing:0.386px;transform:scaleX(1.1300);transform-origin:0 50%;">Device Name:</span>
<span id="t25" class="t" style="left:360.8px;top:359.0px;font-size:8.4px;line-height:11.8px;font-weight:700;color:#444;letter-spacing:0.226px;transform:scaleX(1.1300);transform-origin:0 50%;">FridgeMonitor105</span>
<span id="t26" class="t" style="left:294.0px;top:373.0px;font-size:8.4px;line-height:11.8px;font-weight:400;color:#6a6a6a;letter-spacing:0.477px;transform:scaleX(1.1300);transform-origin:0 50%;">Branch Name:</span>
<span id="t27" class="t" style="left:363.1px;top:373.0px;font-size:8.4px;line-height:11.8px;font-weight:700;color:#444;letter-spacing:0.451px;transform:scaleX(1.1300);transform-origin:0 50%;">Melbourne</span>
<span id="t28" class="t" style="left:294.0px;top:387.0px;font-size:8.4px;line-height:11.8px;font-weight:400;color:#6a6a6a;letter-spacing:0.378px;transform:scaleX(1.1300);transform-origin:0 50%;">Branch Address:</span>
<span id="t29" class="t" style="left:373.2px;top:387.0px;font-size:8.4px;line-height:11.8px;font-weight:700;color:#444;letter-spacing:0.235px;transform:scaleX(1.1300);transform-origin:0 50%;">555 Flinders Street Melbourne Victoria 3000 Australia</span>
<span id="t30" class="t" style="left:798.8px;top:326.0px;font-size:9.6px;line-height:13.4px;font-weight:700;color:#444;letter-spacing:0.565px;transform:scaleX(1.1300);transform-origin:0 50%;">Temperature</span>
<span id="t31" class="t" style="left:1260.6px;top:327.0px;font-size:9px;line-height:12.6px;font-weight:400;color:#12a0c3;letter-spacing:0.577px;text-decoration:underline;transform:scaleX(1.1300);transform-origin:0 50%;">Edit</span>
<span id="t32" class="t" style="left:831.0px;top:355.0px;font-size:9px;line-height:12.6px;font-weight:400;color:#555;letter-spacing:0.263px;transform:scaleX(1.1300);transform-origin:0 50%;">Current Temp</span>
<span id="t33" class="t" style="left:837.8px;top:366.0px;font-size:13.8px;line-height:19.3px;font-weight:700;color:#444;letter-spacing:-0.000px;transform:scaleX(1.1115);transform-origin:0 50%;">4.33 °C</span>
<span id="t34" class="t" style="left:956.9px;top:355.0px;font-size:9px;line-height:12.6px;font-weight:400;color:#555;letter-spacing:0.347px;transform:scaleX(1.1300);transform-origin:0 50%;">Current Humidity</span>
<span id="t35" class="t" style="left:970.1px;top:366.0px;font-size:13.8px;line-height:19.3px;font-weight:700;color:#444;letter-spacing:0.000px;transform:scaleX(1.0924);transform-origin:0 50%;">50.33 %</span>
<span id="t36" class="t" style="left:817.1px;top:399.0px;font-size:7px;line-height:9.8px;font-weight:400;color:#555;letter-spacing:0.135px;transform:scaleX(1.1300);transform-origin:0 50%;">Operating Temp:</span>
<span id="t37" class="t" style="left:886.4px;top:399.0px;font-size:7px;line-height:9.8px;font-weight:700;color:#444;letter-spacing:0.000px;transform:scaleX(1.0586);transform-origin:0 50%;">-5 °C</span>
<span id="t38" class="t" style="left:944.9px;top:399.0px;font-size:7px;line-height:9.8px;font-weight:400;color:#555;letter-spacing:0.205px;transform:scaleX(1.1300);transform-origin:0 50%;">Operating Humidity:</span>
<span id="t39" class="t" style="left:1025.4px;top:399.0px;font-size:7px;line-height:9.8px;font-weight:700;color:#444;letter-spacing:0.000px;transform:scaleX(1.0559);transform-origin:0 50%;">100 %</span>
<span id="t40" class="t" style="left:282.8px;top:471.0px;font-size:9.4px;line-height:13.2px;font-weight:700;color:#444;letter-spacing:0.401px;transform:scaleX(1.1300);transform-origin:0 50%;">Fridge Analytics</span>
<span id="t41" class="t" style="left:294.9px;top:518.0px;font-size:8.7px;line-height:12.2px;font-weight:400;color:#12a0c3;letter-spacing:0.507px;transform:scaleX(1.1300);transform-origin:0 50%;">Temperature</span>
<span id="t42" class="t" style="left:388.4px;top:518.0px;font-size:8.7px;line-height:12.2px;font-weight:400;color:#888;letter-spacing:0.754px;transform:scaleX(1.1300);transform-origin:0 50%;">Humidity</span>
<span id="t43" class="t" style="left:282.5px;top:555.0px;font-size:8.4px;line-height:11.8px;font-weight:700;color:#444;letter-spacing:0.433px;transform:scaleX(1.1300);transform-origin:0 50%;">Date From</span>
<span id="t44" class="t" style="left:401.7px;top:555.0px;font-size:8.4px;line-height:11.8px;font-weight:700;color:#444;letter-spacing:0.371px;transform:scaleX(1.1300);transform-origin:0 50%;">Date To</span>
<span id="t45" class="t" style="left:520.4px;top:555.0px;font-size:8.4px;line-height:11.8px;font-weight:700;color:#444;letter-spacing:0.241px;transform:scaleX(1.1300);transform-origin:0 50%;">Group By</span>
<span id="t46" class="t" style="left:329.1px;top:578.0px;font-size:8.6px;line-height:12.0px;font-weight:400;color:#444;letter-spacing:0.171px;transform:scaleX(1.1300);transform-origin:0 50%;">19/03/2021</span>
<span id="t47" class="t" style="left:448.4px;top:578.0px;font-size:8.6px;line-height:12.0px;font-weight:400;color:#444;letter-spacing:0.220px;transform:scaleX(1.1300);transform-origin:0 50%;">19/04/2021</span>
<span id="t48" class="t" style="left:532.8px;top:578.0px;font-size:8.6px;line-height:12.0px;font-weight:400;color:#444;letter-spacing:0.703px;transform:scaleX(1.1300);transform-origin:0 50%;">Hour</span>
<span id="t49" class="t" style="left:614.1px;top:578.0px;font-size:8.8px;line-height:12.3px;font-weight:400;color:#fff;letter-spacing:0.263px;-webkit-text-stroke:0.20px #fff;transform:scaleX(1.1300);transform-origin:0 50%;">Apply</span>
<span id="t50" class="t" style="left:300.4px;top:620.0px;font-size:7.6px;line-height:10.6px;font-weight:400;color:#666;letter-spacing:0.000px;transform:scaleX(1.0105);transform-origin:0 50%;">34.1</span>
<span id="t51" class="t" style="left:300.4px;top:657.0px;font-size:7.6px;line-height:10.6px;font-weight:400;color:#666;letter-spacing:0.000px;transform:scaleX(1.0105);transform-origin:0 50%;">27.3</span>
<span id="t52" class="t" style="left:299.1px;top:694.0px;font-size:7.6px;line-height:10.6px;font-weight:400;color:#666;letter-spacing:-0.000px;transform:scaleX(1.0984);transform-origin:0 50%;">20.5</span>
<span id="t53" class="t" style="left:301.3px;top:730.0px;font-size:7.6px;line-height:10.6px;font-weight:400;color:#666;letter-spacing:0.000px;transform:scaleX(0.9496);transform-origin:0 50%;">13.6</span>
<span id="t54" class="t" style="left:303.1px;top:767.0px;font-size:7.6px;line-height:10.6px;font-weight:400;color:#666;letter-spacing:0.133px;transform:scaleX(1.1300);transform-origin:0 50%;">6.8</span>
<span id="t55" class="t" style="left:302.7px;top:804.0px;font-size:7.6px;line-height:10.6px;font-weight:400;color:#666;letter-spacing:0.310px;transform:scaleX(1.1300);transform-origin:0 50%;">0.0</span>
<span id="t56" class="t" style="left:510.4px;top:820.0px;font-size:7.5px;line-height:10.5px;font-weight:400;color:#666;letter-spacing:0.000px;transform:scaleX(1.0847);transform-origin:0 50%;">13 Apr</span>
<span id="t57" class="t" style="left:809.8px;top:820.0px;font-size:7.5px;line-height:10.5px;font-weight:400;color:#666;letter-spacing:0.021px;transform:scaleX(1.1300);transform-origin:0 50%;">14 Apr</span>
<span id="t58" class="t" style="left:255.7px;top:711.0px;font-size:7.5px;line-height:10.5px;font-weight:400;color:#666;letter-spacing:0.641px;transform:rotate(-90deg) scaleX(1.0000);transform-origin:50% 50%;">Temperature (°C)</span>
<span id="t59" class="t" style="left:762.2px;top:875.0px;font-size:11.4px;line-height:16.0px;font-weight:400;color:#444;letter-spacing:0.085px;transform:scaleX(1.1300);transform-origin:0 50%;">Location</span>
</div>
</div></div>
<!-- MODAL -->
<div class="a" style="left:894px;top:426.8px;width:571.2px;height:437px;background:#fff;border-radius:3px 3px 4px 4px;box-shadow:0 1px 12px rgba(0,0,0,.3);overflow:hidden;">
<div class="a" style="left:0;top:0;width:100%;height:35.8px;background:#f6f6f6;"></div>
</div>
<div class="a" style="left:915px;top:497px;width:528px;height:1px;background:#e4e4e4;"></div>
<div class="a" style="left:1019.1px;top:495.2px;width:103.8px;height:2px;background:#1592b3;"></div>
<div class="a" style="left:915px;top:524.8px;width:251.8px;height:26.2px;border:1.6px solid #b9b9b9;border-radius:2.5px;background:#fff;"></div>
<div class="a" style="left:1179.3px;top:524.8px;width:251.8px;height:26.2px;border:1.6px solid #b9b9b9;border-radius:2.5px;background:#fff;"></div>
<div class="a" style="left:915.2px;top:597.2px;width:88.5px;height:90.3px;border:1px solid #dcdcdc;border-radius:3.5px;background:#fff;"></div>
<div class="a" style="left:1015.0px;top:597.2px;width:88.5px;height:90.3px;border:1px solid #dcdcdc;border-radius:3.5px;background:#fff;"></div>
<div class="a" style="left:1114.7px;top:597.2px;width:88.5px;height:90.3px;border:1px solid #dcdcdc;border-radius:3.5px;background:#fff;"></div>
<div class="a" style="left:1214.4px;top:597.2px;width:88.5px;height:90.3px;border:1px solid #dcdcdc;border-radius:3.5px;background:#fff;"></div>
<div class="a" style="left:1313.6px;top:597.2px;width:90.6px;height:90.6px;border:2px solid #1897bb;border-radius:4px;background:#fff;"></div>
<div class="a" style="left:914.7px;top:699.2px;width:88.5px;height:88.4px;border:1px solid #dcdcdc;border-radius:3.5px;background:#fff;"></div>
<div class="a" style="left:915px;top:811px;width:528px;height:1px;background:#e6e6e6;"></div>
<div class="a" style="left:1322.2px;top:823.1px;width:57.4px;height:27.2px;border-radius:3px;background:#d50004;"></div>
<div class="a" style="left:1382.6px;top:823.1px;width:57.4px;height:27.2px;border-radius:3px;background:#1592b3;"></div>
<svg width="1517" height="909" viewBox="0 0 1517 909">
<path d="M1447.2,435.6 L1455.6,444 M1455.6,435.6 L1447.2,444" stroke="#333" stroke-width="1.3" fill="none" stroke-linecap="round"/>
<circle cx="961.7" cy="640.8" r="7.3" fill="none" stroke="#333" stroke-width="1.15" stroke-linecap="round" stroke-linejoin="round"/><path d="M964.8,636.3 C967.8,638.6 968.6,642.6 966.4,646" fill="none" stroke="#333" stroke-width="1.15" stroke-linecap="round" stroke-linejoin="round"/><path d="M965.8,634.6 L970.6,631.4 M967.2,635.6 L972.4,633.6 M968.6,629.4 L968,634 M966.4,631.2 L967.4,635" fill="none" stroke="#333" stroke-width="0.9" stroke-linecap="round"/><path d="M950.4,620.8 H953.2 V622.6 C956,624.6 957.2,627.6 956.8,630.6 L955.4,629.4 L954.2,632 L952.8,629.8 L951.4,633.2 L950,629.8 L948.6,631.2 L947.2,630.4 C946.8,627.6 948,624.6 950.4,622.6 Z" fill="#fff" stroke="#333" stroke-width="1.15" stroke-linecap="round" stroke-linejoin="round"/><path d="M948.6,631.4 C949,636 946,640 946,643.8 C946,646.8 948.2,648.4 950.6,648.4 C952.6,648.4 954.2,647.4 954.8,646 M955.4,630.6 C955.6,633 956,634.4 956.6,635.4" fill="none" stroke="#333" stroke-width="1.15" stroke-linecap="round" stroke-linejoin="round"/>
<path d="M1064.4,622.6 L1066.2,620.8 L1068,622.8 C1073.4,628.6 1075,636 1071.6,642 C1068.6,646.8 1063.4,648.4 1058.4,647.6" fill="none" stroke="#333" stroke-width="1.15" stroke-linecap="round" stroke-linejoin="round"/><path d="M1064.4,622.6 C1065.6,627.6 1063.6,631.4 1060,633.6 M1066.6,624.6 C1068.6,631 1066.4,638.6 1060.6,643.4 M1068,622.8 L1066.4,625" fill="none" stroke="#333" stroke-width="1.15" stroke-linecap="round" stroke-linejoin="round"/><path d="M1052.8,632 C1056,630.6 1059.4,631.4 1060.4,634 C1061.6,638.4 1059,645.4 1053.4,648.4 C1048,646.4 1044.6,639.6 1045.6,635 C1046.6,631.6 1050,631 1052.8,632 Z" fill="#fff" stroke="#333" stroke-width="1.15" stroke-linecap="round" stroke-linejoin="round"/><path d="M1046.4,634.4 L1049,636.4 L1051,634.6 L1052.8,637.2 L1054.8,634.6 L1056.8,636.2 L1059.6,633.6 M1052.6,631.6 C1052.8,630 1053.6,628.8 1054.8,628" fill="none" stroke="#333" stroke-width="1.15" stroke-linecap="round" stroke-linejoin="round"/><path d="M1049,640 v0.6 M1053,641 v0.6 M1057,639.6 v0.6 M1051,644 v0.6 M1055.2,644.2 v0.6" fill="none" stroke="#333" stroke-width="1" stroke-linecap="round"/>
<path d="M1145.2,632.4 C1145.2,627 1151,623.8 1158.8,623.8 C1166.6,623.8 1172.4,627 1172.4,632.4 Z" fill="none" stroke="#333" stroke-width="1.15" stroke-linecap="round" stroke-linejoin="round"/><rect x="1145.4" y="634" width="26.8" height="3.4" fill="#c2c2c2"/><path d="M1145.4,635.7 H1172.2" stroke="#666" stroke-width="0.7"/><path d="M1145.2,634 H1172.4 M1145.2,637.4 H1172.4" fill="none" stroke="#333" stroke-width="1.15" stroke-linecap="round" stroke-linejoin="round"/><path d="M1145.2,639.2 C1145.2,643.2 1151,645.4 1158.8,645.4 C1166.6,645.4 1172.4,643.2 1172.4,639.2" fill="none" stroke="#333" stroke-width="1.15" stroke-linecap="round" stroke-linejoin="round"/><path d="M1145.2,639.2 Q1147,638.4 1148.6,639.4 T1152,640.2 T1155.4,640.6 T1158.8,641.2 T1162.2,640.6 T1165.6,640.2 T1169,639.4 T1172.4,639.2" fill="none" stroke="#333" stroke-width="1.15" stroke-linecap="round" stroke-linejoin="round"/>
<rect x="1247.8" y="622.2" width="2.6" height="9.4" rx="1.3" fill="#aaa" stroke="#333" stroke-width="1"/><rect x="1266.2" y="622.2" width="2.6" height="9.4" rx="1.3" fill="#aaa" stroke="#333" stroke-width="1"/><path d="M1250.6,628.2 L1255.4,624.6 C1256,622 1257,620.6 1258.3,620.6 C1259.6,620.6 1260.6,622 1261.2,624.6 L1266,628.2 M1250.4,631 L1252.2,636.4 C1249.6,637 1248.4,639 1249,641.4 C1249.6,644 1251.2,646.4 1252.6,648 M1266.2,631 L1264.4,636.4 C1267,637 1268.2,639 1267.6,641.4 C1267,644 1265.4,646.4 1264,648 M1252.6,648 L1254,641.2 C1255.2,642.8 1256.6,643.6 1258.3,643.6 C1260,643.6 1261.4,642.8 1262.6,641.2 L1264,648 M1250.8,648.4 H1254.4 M1262.2,648.4 H1265.8" fill="none" stroke="#333" stroke-width="1.15" stroke-linecap="round" stroke-linejoin="round"/>
<rect x="1347.4" y="620.6" width="7.6" height="3" rx="0.9" fill="none" stroke="#333" stroke-width="1.15" stroke-linecap="round" stroke-linejoin="round"/><path d="M1348.8,623.6 C1348.8,627.6 1345.4,629.6 1345.4,633.4 V646.6 Q1345.4,648.4 1347.2,648.4 H1355 Q1356.8,648.4 1356.8,646.6 V633.4 C1356.8,629.6 1353.4,627.6 1353.4,623.6" fill="none" stroke="#333" stroke-width="1.15" stroke-linecap="round" stroke-linejoin="round"/><path d="M1345.4,634.2 Q1347.3,632.6 1349.2,634.2 T1353,634.2 T1356.8,634.2 M1345.4,641 Q1347.3,639.4 1349.2,641 T1353,641 T1356.8,641" fill="none" stroke="#333" stroke-width="1.15" stroke-linecap="round" stroke-linejoin="round"/><path d="M1358.4,631 H1372 L1369.4,648.4 H1360.8 Z M1360.3,645.2 H1369.9" fill="none" stroke="#333" stroke-width="1.15" stroke-linecap="round" stroke-linejoin="round"/><rect x="1361" y="645.6" width="8.2" height="2.4" fill="#bbb"/>
<path d="M952.4,749.8 V726.4 M952.4,721.4 V727" fill="none" stroke="#333" stroke-width="1.35" stroke-linecap="round" stroke-linejoin="round"/><path d="M950.0,723 V727.4 M954.8,723 V727.4" fill="none" stroke="#333" stroke-width="0.9" stroke-linecap="round"/><path d="M952.4,732.6 C951.4,729.2 948.8,728.2 947.0,728.6 C947.2,731.2 949.4,732.6 952.4,732.6 Z" fill="none" stroke="#333" stroke-width="1.35" stroke-linecap="round" stroke-linejoin="round"/><path d="M952.4,732.6 C953.4,729.2 956.0,728.2 957.8,728.6 C957.6,731.2 955.4,732.6 952.4,732.6 Z" fill="none" stroke="#333" stroke-width="1.35" stroke-linecap="round" stroke-linejoin="round"/><path d="M952.4,738.4 C951.4,735.0 948.8,734.0 947.0,734.4 C947.2,737.0 949.4,738.4 952.4,738.4 Z" fill="none" stroke="#333" stroke-width="1.35" stroke-linecap="round" stroke-linejoin="round"/><path d="M952.4,738.4 C953.4,735.0 956.0,734.0 957.8,734.4 C957.6,737.0 955.4,738.4 952.4,738.4 Z" fill="none" stroke="#333" stroke-width="1.35" stroke-linecap="round" stroke-linejoin="round"/><path d="M952.4,744.2 C951.4,740.8 948.8,739.8 947.0,740.2 C947.2,742.8 949.4,744.2 952.4,744.2 Z" fill="none" stroke="#333" stroke-width="1.35" stroke-linecap="round" stroke-linejoin="round"/><path d="M952.4,744.2 C953.4,740.8 956.0,739.8 957.8,740.2 C957.6,742.8 955.4,744.2 952.4,744.2 Z" fill="none" stroke="#333" stroke-width="1.35" stroke-linecap="round" stroke-linejoin="round"/><path d="M965.4,749.8 V726.4 M965.4,721.4 V727" fill="none" stroke="#333" stroke-width="1.35" stroke-linecap="round" stroke-linejoin="round"/><path d="M963.0,723 V727.4 M967.8,723 V727.4" fill="none" stroke="#333" stroke-width="0.9" stroke-linecap="round"/><path d="M965.4,732.6 C964.4,729.2 961.8,728.2 960.0,728.6 C960.2,731.2 962.4,732.6 965.4,732.6 Z" fill="none" stroke="#333" stroke-width="1.35" stroke-linecap="round" stroke-linejoin="round"/><path d="M965.4,732.6 C966.4,729.2 969.0,728.2 970.8,728.6 C970.6,731.2 968.4,732.6 965.4,732.6 Z" fill="none" stroke="#333" stroke-width="1.35" stroke-linecap="round" stroke-linejoin="round"/><path d="M965.4,738.4 C964.4,735.0 961.8,734.0 960.0,734.4 C960.2,737.0 962.4,738.4 965.4,738.4 Z" fill="none" stroke="#333" stroke-width="1.35" stroke-linecap="round" stroke-linejoin="round"/><path d="M965.4,738.4 C966.4,735.0 969.0,734.0 970.8,734.4 C970.6,737.0 968.4,738.4 965.4,738.4 Z" fill="none" stroke="#333" stroke-width="1.35" stroke-linecap="round" stroke-linejoin="round"/><path d="M965.4,744.2 C964.4,740.8 961.8,739.8 960.0,740.2 C960.2,742.8 962.4,744.2 965.4,744.2 Z" fill="none" stroke="#333" stroke-width="1.35" stroke-linecap="round" stroke-linejoin="round"/><path d="M965.4,744.2 C966.4,740.8 969.0,739.8 970.8,740.2 C970.6,742.8 968.4,744.2 965.4,744.2 Z" fill="none" stroke="#333" stroke-width="1.35" stroke-linecap="round" stroke-linejoin="round"/>
</svg>
<div class="tl">
<span id="t60" class="t" style="left:1138.4px;top:435.0px;font-size:13.8px;line-height:19.3px;font-weight:700;color:#333;letter-spacing:0.000px;transform:scaleX(1.1284);transform-origin:0 50%;">Edit Fridge</span>
<span id="t61" class="t" style="left:950.7px;top:474.0px;font-size:8.8px;line-height:12.3px;font-weight:400;color:#7d7d7d;letter-spacing:0.396px;-webkit-text-stroke:0.12px #7d7d7d;transform:scaleX(1.1300);transform-origin:0 50%;">Details</span>
<span id="t62" class="t" style="left:1040.3px;top:474.0px;font-size:8.8px;line-height:12.3px;font-weight:400;color:#2399bd;letter-spacing:0.518px;-webkit-text-stroke:0.12px #2399bd;transform:scaleX(1.1300);transform-origin:0 50%;">Temperature</span>
<span id="t63" class="t" style="left:914.9px;top:509.0px;font-size:8.1px;line-height:11.3px;font-weight:700;color:#333;letter-spacing:0.518px;transform:scaleX(1.1300);transform-origin:0 50%;">Operating Temperature (°C)</span>
<span id="t64" class="t" style="left:1179.1px;top:509.0px;font-size:8.1px;line-height:11.3px;font-weight:700;color:#333;letter-spacing:0.475px;transform:scaleX(1.1300);transform-origin:0 50%;">Operating Humidity (%)</span>
<span id="t65" class="t" style="left:927.4px;top:532.0px;font-size:9px;line-height:12.6px;font-weight:400;color:#333;letter-spacing:0.029px;transform:scaleX(1.1300);transform-origin:0 50%;">-5</span>
<span id="t66" class="t" style="left:1191.6px;top:532.0px;font-size:9px;line-height:12.6px;font-weight:400;color:#333;letter-spacing:0.000px;transform:scaleX(1.0970);transform-origin:0 50%;">100</span>
<span id="t67" class="t" style="left:914.8px;top:566.0px;font-size:8.1px;line-height:11.3px;font-weight:700;color:#333;letter-spacing:0.389px;transform:scaleX(1.1300);transform-origin:0 50%;">3 Main Food Groups</span>
<span id="t68" class="t" style="left:914.8px;top:582.0px;font-size:8.3px;line-height:11.6px;font-weight:400;color:#333;letter-spacing:0.528px;-webkit-text-stroke:0.20px #333;transform:scaleX(1.1300);transform-origin:0 50%;">Please select up to 3 food groups from the icons below</span>
<span id="t69" class="t" style="left:926.6px;top:651.0px;font-size:8.6px;line-height:12.0px;font-weight:400;color:#a6a6a6;letter-spacing:0.230px;-webkit-text-stroke:0.12px #a6a6a6;transform:scaleX(1.1300);transform-origin:0 50%;">VEGETABLES</span>
<span id="t70" class="t" style="left:1041.1px;top:651.0px;font-size:8.6px;line-height:12.0px;font-weight:400;color:#a6a6a6;letter-spacing:0.156px;-webkit-text-stroke:0.12px #a6a6a6;transform:scaleX(1.1300);transform-origin:0 50%;">FRUITS</span>
<span id="t71" class="t" style="left:1144.3px;top:651.0px;font-size:8.6px;line-height:12.0px;font-weight:400;color:#a6a6a6;letter-spacing:0.823px;-webkit-text-stroke:0.12px #a6a6a6;transform:scaleX(1.1300);transform-origin:0 50%;">MEAT</span>
<span id="t72" class="t" style="left:1235.0px;top:651.0px;font-size:8.6px;line-height:12.0px;font-weight:400;color:#a6a6a6;letter-spacing:0.306px;-webkit-text-stroke:0.12px #a6a6a6;transform:scaleX(1.1300);transform-origin:0 50%;">POULTRY</span>
<span id="t73" class="t" style="left:1343.2px;top:651.0px;font-size:8.6px;line-height:12.0px;font-weight:700;color:#444;letter-spacing:0.285px;transform:scaleX(1.1300);transform-origin:0 50%;">DAIRY</span>
<span id="t74" class="t" style="left:939.3px;top:753.0px;font-size:8.6px;line-height:12.0px;font-weight:400;color:#a6a6a6;letter-spacing:0.249px;-webkit-text-stroke:0.12px #a6a6a6;transform:scaleX(1.1300);transform-origin:0 50%;">GRAINS</span>
<span id="t75" class="t" style="left:1274.1px;top:831.0px;font-size:9.1px;line-height:12.7px;font-weight:400;color:#333;letter-spacing:0.125px;-webkit-text-stroke:0.20px #333;transform:scaleX(1.1300);transform-origin:0 50%;">Cancel</span>
<span id="t76" class="t" style="left:1335.2px;top:831.0px;font-size:9.1px;line-height:12.7px;font-weight:400;color:#fff;letter-spacing:0.334px;-webkit-text-stroke:0.25px #fff;transform:scaleX(1.1300);transform-origin:0 50%;">Delete</span>
<span id="t77" class="t" style="left:1399.7px;top:831.0px;font-size:9.1px;line-height:12.7px;font-weight:400;color:#fff;letter-spacing:0.000px;-webkit-text-stroke:0.25px #fff;transform:scaleX(1.0997);transform-origin:0 50%;">Save</span>
</div>
</body></html>
